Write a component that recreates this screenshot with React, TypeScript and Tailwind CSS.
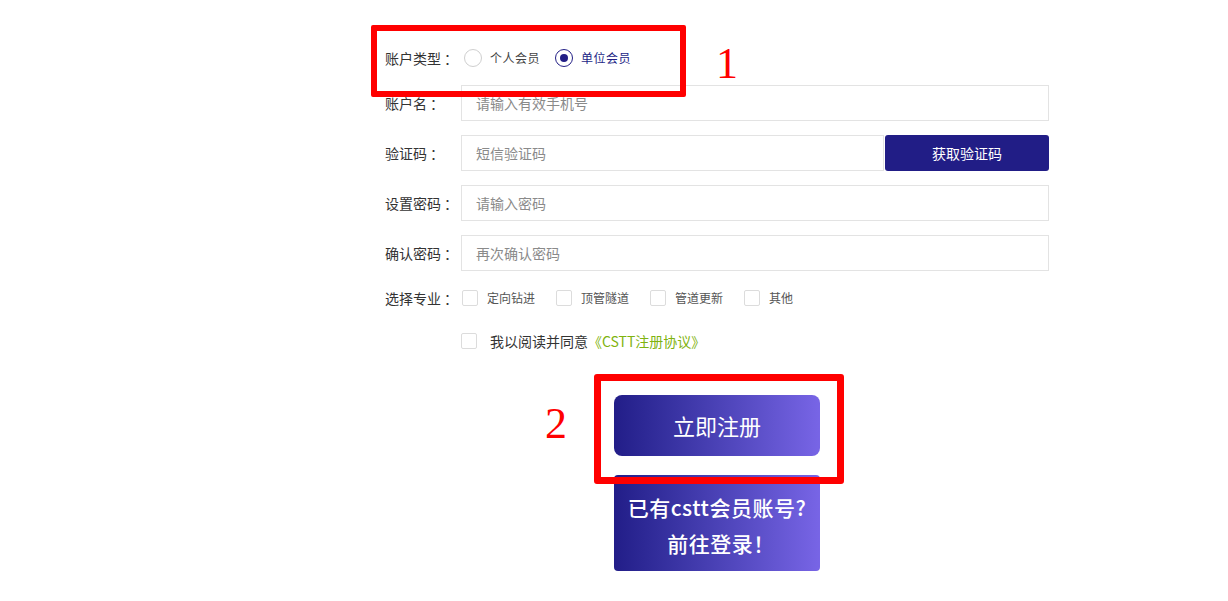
import { useState } from 'react'

const FONT = { fontFamily: '"Microsoft YaHei", "Noto Sans CJK SC", "Noto Sans", sans-serif' }

const FIELDS = [
  { label: '账户名', placeholder: '请输入有效手机号' },
  { label: '验证码', placeholder: '短信验证码', code: true },
  { label: '设置密码', placeholder: '请输入密码' },
  { label: '确认密码', placeholder: '再次确认密码' },
]

const MAJORS = ['定向钻进', '顶管隧道', '管道更新', '其他']

function Label({ text, width }: { text: string; width: string }) {
  return (
    <span className={`flex shrink-0 items-center text-[14px] text-[#333] ${width}`}>
      {text}
      <span className="ml-[3px]">：</span>
    </span>
  )
}

function Radio({ checked, label, onClick }: { checked: boolean; label: string; onClick: () => void }) {
  return (
    <button type="button" onClick={onClick} className="flex items-center gap-2">
      <span
        className={`flex h-[18px] w-[18px] items-center justify-center rounded-full border ${
          checked ? 'border-[#231f86]' : 'border-[#cfcfcf]'
        }`}
      >
        {checked && <span className="h-[8px] w-[8px] rounded-full bg-[#231f86]" />}
      </span>
      <span className={`text-[12px] tracking-[0.5px] ${checked ? 'text-[#231f86]' : 'text-[#444]'}`}>{label}</span>
    </button>
  )
}

function Box() {
  return <span className="h-[16px] w-[16px] rounded-[2px] border border-[#dcdcdc] bg-white" />
}

export default function App() {
  const [type, setType] = useState<'person' | 'unit'>('unit')

  return (
    <div className="relative h-[601px] w-full overflow-hidden bg-white" style={FONT}>
      <div className="ml-[385px] w-[664px] pt-[40px]">
        <div className="flex h-[36px] items-center">
          <Label text="账户类型" width="w-[79px]" />
          <div className="flex items-center gap-[15px]">
            <Radio checked={type === 'person'} label="个人会员" onClick={() => setType('person')} />
            <Radio checked={type === 'unit'} label="单位会员" onClick={() => setType('unit')} />
          </div>
        </div>

        <div className="mt-[9px] flex flex-col gap-[14px]">
          {FIELDS.map((f) => (
            <div key={f.label} className="flex h-[36px] items-center">
              <Label text={f.label} width="w-[76px]" />
              <div className="flex h-full flex-1">
                <input
                  placeholder={f.placeholder}
                  className="h-full min-w-0 flex-1 border border-[#e3e3e3] px-[14px] text-[14px] text-[#333] outline-none placeholder:text-[#8a8a8a]"
                />
                {f.code && (
                  <button
                    type="button"
                    className="ml-px h-full w-[164px] rounded-[3px] bg-[#211d86] text-[14px] text-white"
                  >
                    获取验证码
                  </button>
                )}
              </div>
            </div>
          ))}
        </div>

        <div className="mt-[15px] flex h-[24px] items-center">
          <Label text="选择专业" width="w-[77px]" />
          <div className="flex items-center">
            {MAJORS.map((m) => (
              <label key={m} className="flex w-[94px] items-center gap-[9px]">
                <Box />
                <span className="text-[12px] text-[#555]">{m}</span>
              </label>
            ))}
          </div>
        </div>

        <div className="mt-[19px] flex h-[24px] items-center pl-[76px]">
          <Box />
          <span className="ml-[13px] text-[14px] text-[#333]">我以阅读并同意</span>
          <a className="text-[14px] text-[#7fb30f]">《CSTT注册协议》</a>
        </div>

        <div className="mt-[42px] flex flex-col items-center gap-[19px]">
          <button
            type="button"
            className="h-[61px] w-[206px] rounded-[8px] bg-gradient-to-r from-[#221d88] to-[#7865e6] text-[22px] text-white"
          >
            立即注册
          </button>
          <button
            type="button"
            className="flex h-[96px] w-[206px] flex-col items-center justify-center rounded-[4px] bg-gradient-to-r from-[#221d88] to-[#7865e6] pt-[4px] text-[21px] font-medium leading-[36px] tracking-[0.5px] text-white"
          >
            <span>已有cstt会员账号?</span>
            <span className="pl-[8px]">前往登录！</span>
          </button>
        </div>
      </div>

      {/* step markers */}
      <div className="pointer-events-none absolute left-[371px] top-[25px] h-[72px] w-[315px] rounded-[2px] border-[6px] border-[#ff0000]" />
      <div className="pointer-events-none absolute left-[594px] top-[374px] h-[110px] w-[250px] rounded-[3px] border-[7px] border-[#ff0000]" />
      <span
        className="pointer-events-none absolute left-[716px] top-[42px] text-[44px] leading-none text-[#ff0000]"
        style={{ fontFamily: '"Liberation Serif", serif' }}
      >
        1
      </span>
      <span
        className="pointer-events-none absolute left-[545px] top-[402px] text-[44px] leading-none text-[#ff0000]"
        style={{ fontFamily: '"Liberation Serif", serif' }}
      >
        2
      </span>
    </div>
  )
}
